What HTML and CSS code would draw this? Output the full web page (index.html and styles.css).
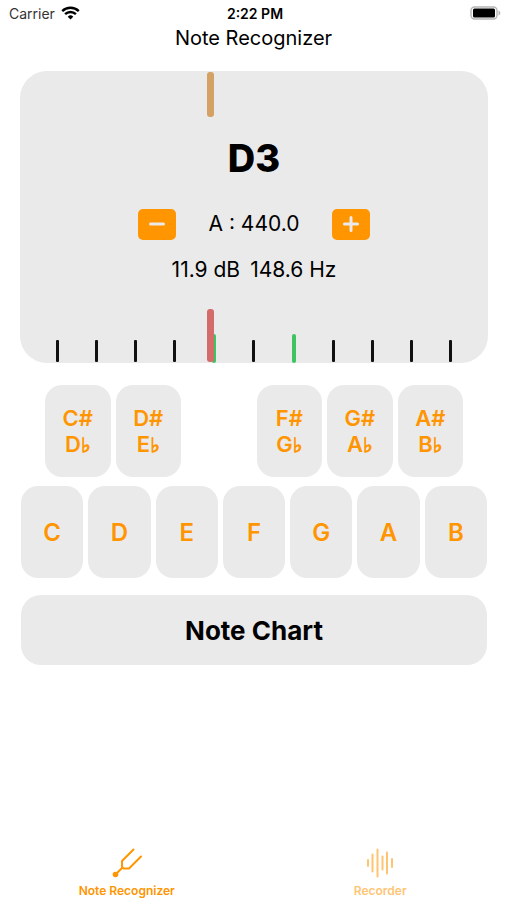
FILE: index.html
```
<!DOCTYPE html>
<html lang="en">
<head>
  <meta charset="UTF-8">
  <meta name="viewport" content="width=device-width, initial-scale=1.0">
  <title>Note Recognizer</title>
  <link rel="stylesheet" href="styles.css">
</head>
<body>
  <!-- Status bar -->
  <div class="status-bar">
    <div class="carrier">
      <span>Carrier</span>
      <svg class="wifi" viewBox="0 0 19 14" aria-hidden="true">
        <path d="M1.2 5.2a11.8 11.8 0 0 1 16.6 0" />
        <path d="M4.1 8.2a7.6 7.6 0 0 1 10.8 0" />
        <path class="wifi-dot" d="M9.5 13.6l-2.8-2.9a4 4 0 0 1 5.6 0z" />
      </svg>
    </div>
    <div class="time">2:22 PM</div>
    <div class="battery">
      <svg viewBox="0 0 31 14" aria-hidden="true">
        <rect class="battery-case" x="1" y="1" width="26" height="12" rx="3.5" />
        <rect x="3" y="2.5" width="22" height="9" rx="1.5" />
        <path class="battery-tip" d="M28.5 4.5c2.4.8 2.4 4.2 0 5z" />
      </svg>
    </div>
  </div>

  <h1>Note Recognizer</h1>

  <main>
    <!-- Tuner display -->
    <section class="display">
      <div class="needle needle-top" style="left: 40%"></div>
      <div class="note">D3</div>
      <div class="pitch">
        <button class="step-btn" aria-label="Lower reference pitch">
          <svg viewBox="0 0 16 16" aria-hidden="true"><path d="M1.5 8h13" /></svg>
        </button>
        <span class="pitch-value">A : 440.0</span>
        <button class="step-btn" aria-label="Raise reference pitch">
          <svg viewBox="0 0 16 16" aria-hidden="true"><path d="M1.5 8h13M8 1.5v13" /></svg>
        </button>
      </div>
      <div class="reading">
        <span>11.9 dB</span>
        <span>148.6 Hz</span>
      </div>
      <div class="scale">
        <i></i><i></i><i></i><i></i><i class="in-tune"></i><i></i><i class="in-tune"></i><i></i><i></i><i></i><i></i>
      </div>
      <div class="needle needle-bottom" style="left: 40%"></div>
    </section>

    <!-- Keyboard -->
    <div class="keys sharps">
      <button>C#<br>D<span class="flat">♭</span></button>
      <button>D#<br>E<span class="flat">♭</span></button>
      <button class="after-gap">F#<br>G<span class="flat">♭</span></button>
      <button>G#<br>A<span class="flat">♭</span></button>
      <button>A#<br>B<span class="flat">♭</span></button>
    </div>
    <div class="keys naturals">
      <button>C</button>
      <button>D</button>
      <button>E</button>
      <button>F</button>
      <button>G</button>
      <button>A</button>
      <button>B</button>
    </div>

    <button class="chart-btn">Note Chart</button>
  </main>

  <!-- Tab bar -->
  <nav>
    <a href="#recognizer" class="active">
      <svg viewBox="0 0 32 32" aria-hidden="true">
        <path d="M22.5 2.5L11 14v5.500l1.500 2H18l12-12M11.500 20.500L5 27" />
        <circle cx="4.5" cy="27.5" r="2.8" />
      </svg>
      <span>Note Recognizer</span>
    </a>
    <a href="#recorder">
      <svg viewBox="0 0 32 32" aria-hidden="true">
        <path d="M4 13v6M8.5 7.5v17M13.5 2.5v27M18.5 9.5v13M23 5.5v21M28 12v8" />
      </svg>
      <span>Recorder</span>
    </a>
  </nav>
</body>
</html>
```
FILE: styles.css
```
/* General Styles */
* {
  box-sizing: border-box;
}

body {
  font-family: Inter, 'Liberation Sans', sans-serif;
  margin: 0;
  min-height: 100vh;
  display: flex;
  flex-direction: column;
  background-color: #fff;
  color: #000;
}

button {
  font-family: inherit;
  padding: 0;
  border: none;
  background-color: #eaeaea;
  cursor: pointer;
}

/* Status bar */
.status-bar {
  display: grid;
  grid-template-columns: 1fr auto 1fr;
  align-items: center;
  height: 26px;
  padding: 0 6px 0 9px;
  font-size: 14px;
}

.carrier {
  display: flex;
  align-items: center;
  gap: 6px;
  color: #333;
}

.wifi {
  width: 19px;
  height: 14px;
  fill: none;
  stroke: #000;
  stroke-width: 2.4;
}

.wifi .wifi-dot {
  fill: #000;
  stroke: none;
}

.time {
  font-weight: 600;
}

.battery {
  display: flex;
  justify-content: flex-end;
}

.battery svg {
  width: 31px;
  height: 14px;
}

.battery-case {
  fill: none;
  stroke: #b5b5b5;
  stroke-width: 1.4;
}

.battery-tip {
  fill: #b5b5b5;
}

h1 {
  margin: 0;
  font-size: 20px;
  font-weight: 400;
  line-height: 24px;
  text-align: center;
}

main {
  display: flex;
  flex-direction: column;
  padding: 21px 19px 21px 20px;
}

/* Tuner display */
.display {
  position: relative;
  display: flex;
  flex-direction: column;
  align-items: center;
  padding-top: 64px;
  border-radius: 27px;
  background-color: #eaeaea;
}

.note {
  font-size: 38px;
  font-weight: 800;
  line-height: 46px;
}

.pitch {
  display: flex;
  align-items: center;
  justify-content: space-between;
  width: 232px;
  margin-top: 27px;
  font-size: 21px;
  line-height: 32px;
}

.step-btn {
  display: flex;
  align-items: center;
  justify-content: center;
  width: 38px;
  height: 31px;
  border-radius: 5px;
  background-color: #ff9500;
}

.step-btn svg {
  width: 16px;
  height: 16px;
  fill: none;
  stroke: #eaeaea;
  stroke-width: 3;
  stroke-linecap: round;
}

.reading {
  display: flex;
  gap: 10px;
  margin-top: 16px;
  font-size: 21px;
  line-height: 28px;
}

.scale {
  display: flex;
  align-items: flex-end;
  justify-content: space-between;
  align-self: stretch;
  height: 29px;
  margin-top: 50px;
  padding: 0 36px;
}

.scale i {
  width: 3px;
  height: 22px;
  margin-bottom: 1px;
  border-radius: 1px;
  background-color: #111;
}

.scale .in-tune {
  width: 4px;
  height: 29px;
  margin-bottom: 0;
  border-radius: 2px;
  background-color: #40c462;
}

.needle {
  position: absolute;
  width: 7px;
  border-radius: 3px;
}

.needle-top {
  top: 1px;
  height: 45px;
  background-color: #d4a264;
}

.needle-bottom {
  bottom: 1px;
  height: 53px;
  background-color: #d36b6b;
}

/* Keyboard */
.keys {
  display: grid;
  gap: 5px;
}

.keys button {
  height: 92px;
  border-radius: 17px;
  color: #ff9500;
  font-weight: 600;
}

.sharps {
  grid-template-columns: repeat(6, 1fr);
  margin: 22px 25px 0;
}

.sharps button {
  font-size: 22px;
  line-height: 26px;
}

.sharps .after-gap {
  grid-column-start: 4;
}

.flat {
  font-family: 'DejaVu Sans', sans-serif;
  font-size: 20px;
  line-height: 20px;
  -webkit-text-stroke: 1px #ff9500;
}

.naturals {
  grid-template-columns: repeat(7, 1fr);
  margin: 9px 1px 0;
}

.naturals button {
  font-size: 24px;
}

.chart-btn {
  height: 70px;
  margin: 17px 1px 0;
  border-radius: 20px;
  color: #000;
  font-size: 26px;
  font-weight: 700;
}

/* Tab bar */
nav {
  display: flex;
  margin-top: auto;
}

nav a {
  flex: 1;
  display: flex;
  flex-direction: column;
  align-items: center;
  gap: 4px;
  padding-bottom: 1px;
  color: #ff9500;
  font-size: 12px;
  font-weight: 600;
  line-height: 16px;
  text-decoration: none;
  opacity: 0.55;
}

nav a.active {
  opacity: 1;
}

nav svg {
  width: 32px;
  height: 32px;
  fill: none;
  stroke: currentColor;
  stroke-width: 2;
  stroke-linecap: round;
  stroke-linejoin: round;
}

nav circle {
  fill: currentColor;
  stroke: none;
}
```
